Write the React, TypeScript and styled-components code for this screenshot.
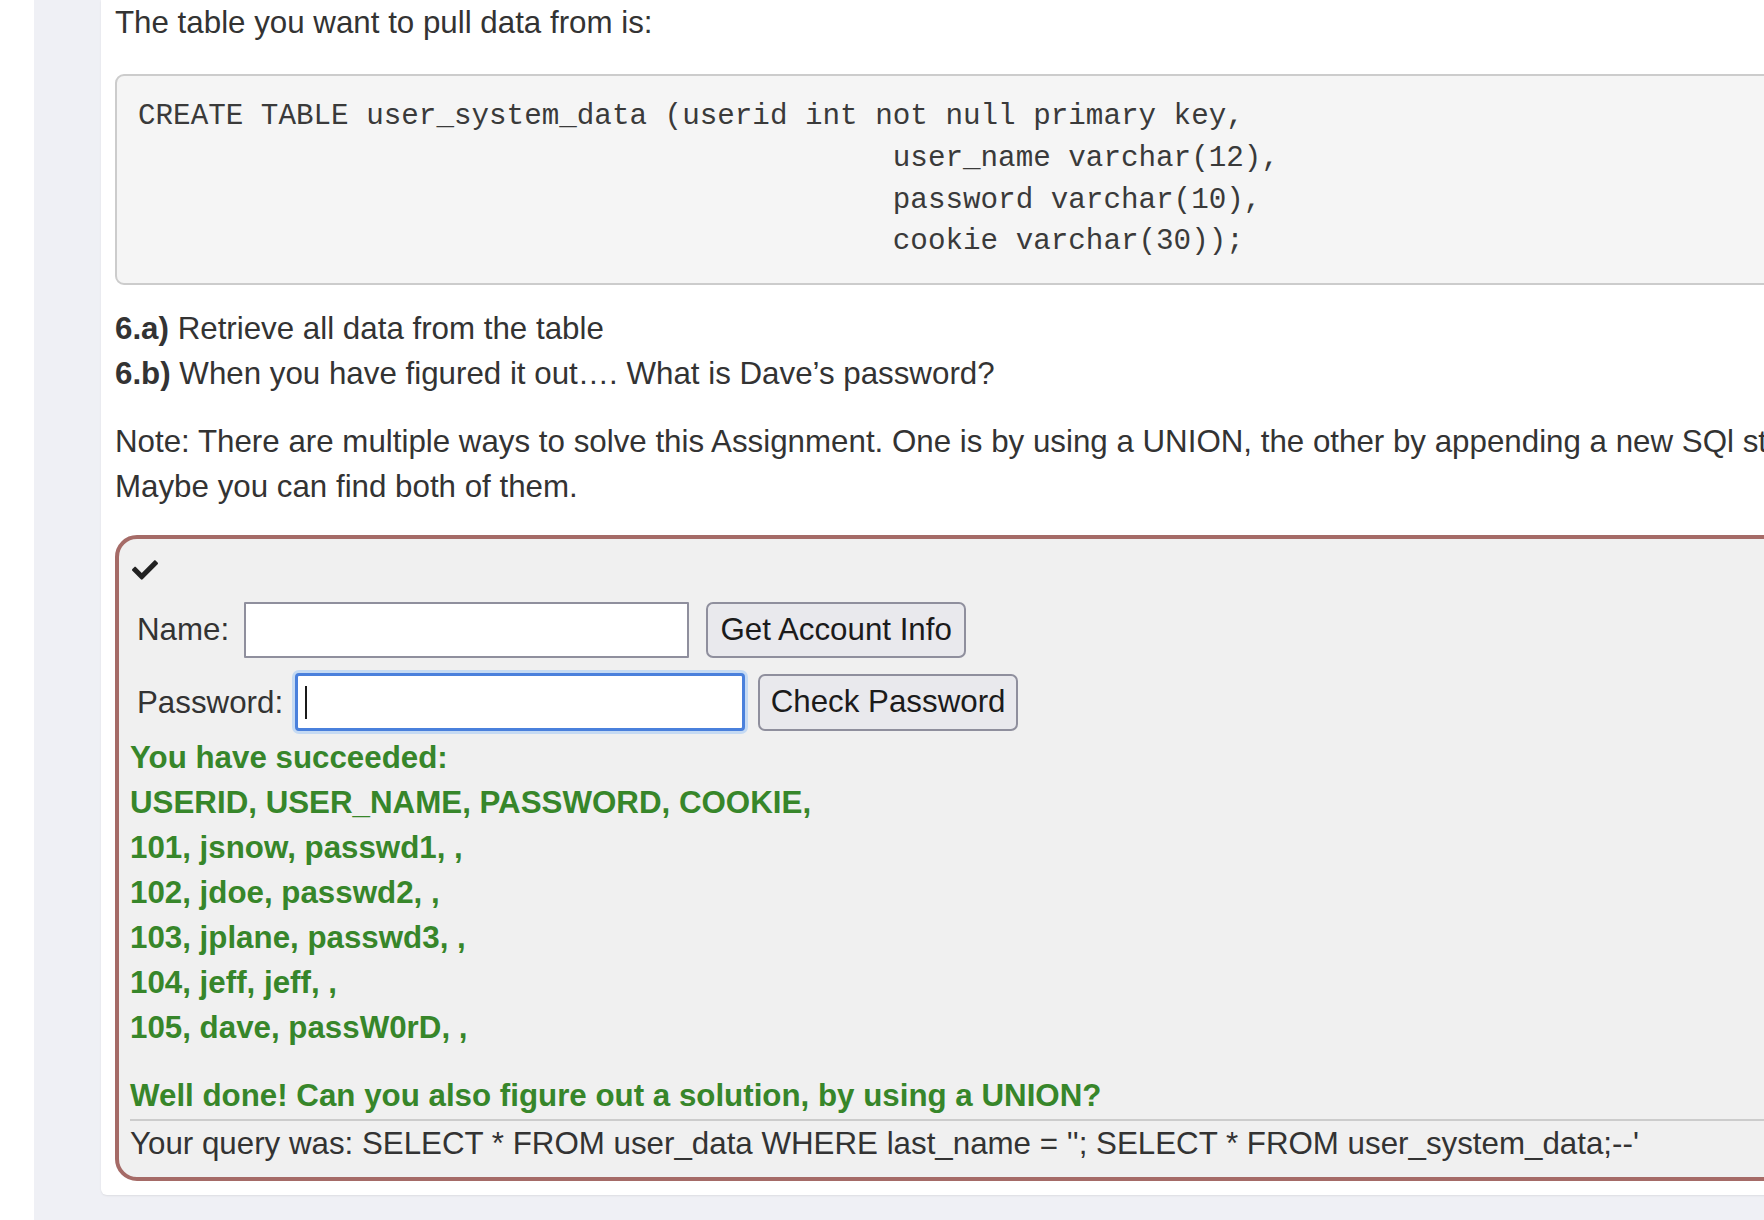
import React from "react";
import styled, { createGlobalStyle } from "styled-components";
import { FaCheck } from "react-icons/fa";

const GlobalStyle = createGlobalStyle`
  html, body {
    margin: 0;
    padding: 0;
    overflow: hidden;
    background: #ffffff;
  }
  body {
    font-family: "Liberation Sans", Arial, Helvetica, sans-serif;
    color: #333333;
  }
  * { box-sizing: border-box; }
`;

const Page = styled.div`
  display: flex;
  width: 1764px;
  height: 1220px;
  overflow: hidden;
`;

const SideEdge = styled.div`
  flex: 0 0 34px;
  background: #ffffff;
`;

const Main = styled.main`
  flex: 1 1 auto;
  min-width: 0;
  background: #eff0f5;
  padding-left: 67px;
  overflow: hidden;
`;

const Card = styled.section`
  width: 1860px;
  background: #ffffff;
  padding: 0 14px 14px 14px;
  border-radius: 0 0 6px 6px;
  box-shadow: 0 1px 2px rgba(0, 0, 0, 0.08);
  font-size: 31.3px;
  line-height: 45px;
`;

const Para = styled.p<{ $mb: number }>`
  margin: 0 0 ${(p) => p.$mb}px 0;
`;

const CodeBlock = styled.pre`
  margin: 0 0 21px 0;
  padding: 20px 21px;
  height: 211px;
  background: #f5f5f5;
  border: 2px solid #cccccc;
  border-radius: 9px;
  font-family: "Liberation Mono", "Courier New", monospace;
  font-size: 29.25px;
  line-height: 41.8px;
  color: #3a3a3a;
  white-space: pre;
  overflow: hidden;
`;

const AttackBox = styled.div`
  margin-top: 26px;
  background: #f0f0f0;
  border: 4px solid #a56b67;
  border-radius: 22px;
  padding: 21px 11px 11px 11px;
`;

const CheckRow = styled.div`
  height: 21px;
  display: flex;
  align-items: center;
  padding-left: 2px;
  color: #222222;
`;

const FormRow = styled.div<{ $mt: number; $h: number; $gap: number }>`
  display: flex;
  align-items: center;
  gap: ${(p) => p.$gap}px;
  margin-top: ${(p) => p.$mt}px;
  height: ${(p) => p.$h}px;
  padding-left: 7px;
`;

const Label = styled.label`
  color: #333333;
  white-space: nowrap;
`;

const TextInput = styled.input<{ $focused?: boolean; $w: number; $h: number }>`
  width: ${(p) => p.$w}px;
  height: ${(p) => p.$h}px;
  font-family: "Liberation Sans", Arial, sans-serif;
  font-size: 31.3px;
  padding: 0 7px;
  outline: none;
  border-radius: ${(p) => (p.$focused ? 4 : 1)}px;
  border: ${(p) => (p.$focused ? "3px solid #4a80dc" : "2px solid #8f8f9d")};
  box-shadow: ${(p) => (p.$focused ? "0 0 0 3px #c5daf3" : "none")};
  background: ${(p) =>
    p.$focused
      ? "linear-gradient(#1a1a1a, #1a1a1a) no-repeat 7px center / 2px 33px, #ffffff"
      : "#ffffff"};
`;

const Button = styled.button<{ $h: number; $ml: number }>`
  margin-left: ${(p) => p.$ml}px;
  width: 260px;
  height: ${(p) => p.$h}px;
  padding: 0 10px;
  background: #e9e9ed;
  border: 2px solid #8f8f9d;
  border-radius: 7px;
  font-family: "Liberation Sans", Arial, sans-serif;
  font-size: 31.3px;
  color: #1b1b1b;
  white-space: nowrap;
`;

const Feedback = styled.div`
  margin-top: 3.5px;
  color: #37862a;
  font-weight: bold;
`;

const FeedbackLine = styled.div``;

const Praise = styled.div`
  margin-top: 23px;
  color: #37862a;
  font-weight: bold;
`;

const Output = styled.div`
  margin-top: 1px;
  border-top: 2px solid #cccccc;
  color: #333333;
  white-space: nowrap;
`;

const code = `CREATE TABLE user_system_data (userid int not null primary key,
                                           user_name varchar(12),
                                           password varchar(10),
                                           cookie varchar(30));`;

const rows = [
  "USERID, USER_NAME, PASSWORD, COOKIE,",
  "101, jsnow, passwd1, ,",
  "102, jdoe, passwd2, ,",
  "103, jplane, passwd3, ,",
  "104, jeff, jeff, ,",
  "105, dave, passW0rD, ,",
];

export default function App() {
  return (
    <>
      <GlobalStyle />
      <Page>
        <SideEdge />
        <Main>
          <Card>
            <Para $mb={29}>The table you want to pull data from is:</Para>
            <CodeBlock>{code}</CodeBlock>
            <Para $mb={22.5}>
              <b>6.a)</b> Retrieve all data from the table
              <br />
              <b>6.b)</b> When you have figured it out…. What is Dave’s password?
            </Para>
            <Para $mb={0}>
              Note: There are multiple ways to solve this Assignment. One is by using a UNION, the
              other by appending a new SQl statement. Maybe you can find both of them.
            </Para>
            <AttackBox>
              <CheckRow>
                <FaCheck size={26} />
              </CheckRow>
              <FormRow $mt={21} $h={56} $gap={15}>
                <Label>Name:</Label>
                <TextInput type="text" $w={445} $h={56} />
                <Button $h={56} $ml={2}>Get Account Info</Button>
              </FormRow>
              <FormRow $mt={15} $h={59} $gap={12}>
                <Label>Password:</Label>
                <TextInput type="password" $focused $w={450} $h={58} />
                <Button $h={57} $ml={1}>Check Password</Button>
              </FormRow>
              <Feedback>
                <FeedbackLine>You have succeeded:</FeedbackLine>
                {rows.map((r) => (
                  <FeedbackLine key={r}>{r}</FeedbackLine>
                ))}
              </Feedback>
              <Praise>Well done! Can you also figure out a solution, by using a UNION?</Praise>
              <Output>
                Your query was: SELECT * FROM user_data WHERE last_name = ''; SELECT * FROM
                user_system_data;--'
              </Output>
            </AttackBox>
          </Card>
        </Main>
      </Page>
    </>
  );
}
